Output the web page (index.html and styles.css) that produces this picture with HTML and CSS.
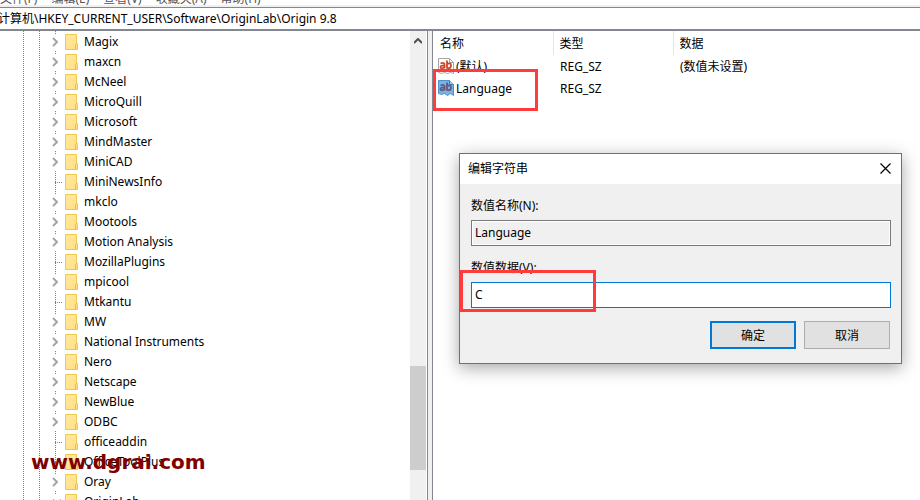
FILE: index.html
```
<!DOCTYPE html>
<html lang="zh-CN">
<head>
<meta charset="utf-8">
<title>注册表编辑器</title>
<link rel="stylesheet" href="styles.css">
</head>
<body>
<svg class="defs" aria-hidden="true">
  <linearGradient id="paper" x1="0" y1="0" x2="1" y2="1"><stop offset="0" stop-color="#ffe9a2"/><stop offset="1" stop-color="#ffdf80"/></linearGradient>
  <symbol id="folder" viewBox="0 0 13 16"><path d="M.5 .5h11v9h1v6H.5z" fill="url(#paper)" stroke="#efc94c"/><path d="M10.500 15.500v-5l1-1" fill="none" stroke="#e8bd38"/></symbol>
  <symbol id="right" viewBox="0 0 6 10"><path d="M1 1l4 4-4 4" fill="none" stroke="#a6a6a6" stroke-width="2"/></symbol>
  <symbol id="down" viewBox="0 0 10 6"><path d="M1 1l4 4 4-4" fill="none" stroke="#505050" stroke-width="2"/></symbol>
</svg>
<nav class="menu"><a href="#">文件(F)</a><a href="#">编辑(E)</a><a href="#">查看(V)</a><a href="#">收藏夹(A)</a><a href="#">帮助(H)</a></nav>
<input class="address" aria-label="地址" value="计算机\HKEY_CURRENT_USER\Software\OriginLab\Origin 9.8">
<main class="panes">
  <section class="tree-pane">
    <ul class="tree">
      <li><span class="twig"><svg class="chev"><use href="#right"/></svg></span><svg class="folder"><use href="#folder"/></svg>Magix</li>
      <li><span class="twig"><svg class="chev"><use href="#right"/></svg></span><svg class="folder"><use href="#folder"/></svg>maxcn</li>
      <li><span class="twig"><svg class="chev"><use href="#right"/></svg></span><svg class="folder"><use href="#folder"/></svg>McNeel</li>
      <li><span class="twig"><svg class="chev"><use href="#right"/></svg></span><svg class="folder"><use href="#folder"/></svg>MicroQuill</li>
      <li><span class="twig"><svg class="chev"><use href="#right"/></svg></span><svg class="folder"><use href="#folder"/></svg>Microsoft</li>
      <li><span class="twig"><svg class="chev"><use href="#right"/></svg></span><svg class="folder"><use href="#folder"/></svg>MindMaster</li>
      <li><span class="twig"><svg class="chev"><use href="#right"/></svg></span><svg class="folder"><use href="#folder"/></svg>MiniCAD</li>
      <li><span class="twig leaf"></span><svg class="folder"><use href="#folder"/></svg>MiniNewsInfo</li>
      <li><span class="twig"><svg class="chev"><use href="#right"/></svg></span><svg class="folder"><use href="#folder"/></svg>mkclo</li>
      <li><span class="twig"><svg class="chev"><use href="#right"/></svg></span><svg class="folder"><use href="#folder"/></svg>Mootools</li>
      <li><span class="twig"><svg class="chev"><use href="#right"/></svg></span><svg class="folder"><use href="#folder"/></svg>Motion Analysis</li>
      <li><span class="twig leaf"></span><svg class="folder"><use href="#folder"/></svg>MozillaPlugins</li>
      <li><span class="twig"><svg class="chev"><use href="#right"/></svg></span><svg class="folder"><use href="#folder"/></svg>mpicool</li>
      <li><span class="twig leaf"></span><svg class="folder"><use href="#folder"/></svg>Mtkantu</li>
      <li><span class="twig"><svg class="chev"><use href="#right"/></svg></span><svg class="folder"><use href="#folder"/></svg>MW</li>
      <li><span class="twig"><svg class="chev"><use href="#right"/></svg></span><svg class="folder"><use href="#folder"/></svg>National Instruments</li>
      <li><span class="twig"><svg class="chev"><use href="#right"/></svg></span><svg class="folder"><use href="#folder"/></svg>Nero</li>
      <li><span class="twig"><svg class="chev"><use href="#right"/></svg></span><svg class="folder"><use href="#folder"/></svg>Netscape</li>
      <li><span class="twig"><svg class="chev"><use href="#right"/></svg></span><svg class="folder"><use href="#folder"/></svg>NewBlue</li>
      <li><span class="twig"><svg class="chev"><use href="#right"/></svg></span><svg class="folder"><use href="#folder"/></svg>ODBC</li>
      <li><span class="twig leaf"></span><svg class="folder"><use href="#folder"/></svg>officeaddin</li>
      <li><span class="twig leaf"></span><svg class="folder"><use href="#folder"/></svg>OfficeToolPlus</li>
      <li><span class="twig"><svg class="chev"><use href="#right"/></svg></span><svg class="folder"><use href="#folder"/></svg>Oray</li>
      <li><span class="twig"><svg class="chev open"><use href="#down"/></svg></span><svg class="folder"><use href="#folder"/></svg>OriginLab</li>
    </ul>
    <div class="scroll"><svg class="up" viewBox="0 0 8 6"><path d="M0 5l4-4 4 4" fill="none" stroke="#505050" stroke-width="2"/></svg><div class="thumb"></div></div>
  </section>
  <div class="splitter"></div>
  <section class="values">
    <table>
      <thead><tr><th class="name">名称</th><th class="type">类型</th><th>数据</th></tr></thead>
      <tbody>
        <tr><td class="name"><span class="value"><svg class="ab" viewBox="0 0 16 16"><path d="M.5 .5h11l4 4v11l-3-1-3 1-3-1-3 1-3-1z" fill="#fff" stroke="#a5a5a5"/><path d="M11.500 .5v4h4" fill="none" stroke="#a5a5a5"/><g fill="none" stroke="#d04525" stroke-width="1.800"><path d="M2.500 5.500q4-1.500 4 1v4M6.500 7.500q-4-.2-4 1.500 0 2.500 4 .2M9 2.500v8M9 6q4-2 4 1.500t-4 2.500"/></g></svg>(默认)</span></td><td>REG_SZ</td><td>(数值未设置)</td></tr>
        <tr><td class="name"><span class="value"><svg class="ab" viewBox="0 0 16 16"><path d="M.5 .5h11l4 4v11l-3-2-3 2-3-2-3 1-3-1z" fill="#76b5e9" stroke="#4b91cd"/><path d="M11.500 .5v4h4" fill="#9dcdf3" stroke="#397fbc"/><g fill="none" stroke="#695776" stroke-width="1.800"><path d="M2.500 5.500q4-1.500 4 1v4M6.500 7.500q-4-.2-4 1.500 0 2.500 4 .2M9 2.500v8M9 6q4-2 4 1.500t-4 2.500"/></g></svg>Language</span></td><td>REG_SZ</td><td></td></tr>
      </tbody>
    </table>
  </section>
</main>
<form class="dialog" role="dialog" aria-labelledby="title">
  <header><h1 id="title">编辑字符串</h1><button type="button" class="close" aria-label="关闭"><svg viewBox="0 0 11 11"><path d="M.5 .5l10 10M10.500 .5l-10 10" stroke="#000" stroke-width="1.200"/></svg></button></header>
  <div class="fields">
    <label for="vname">数值名称(N):</label>
    <input id="vname" value="Language" readonly>
    <label for="vdata">数值数据(V):</label>
    <input id="vdata" class="active" value="C">
    <div class="actions"><button class="ok" type="button">确定</button><button type="button">取消</button></div>
  </div>
  <div class="mark mark-data"></div>
</form>
<div class="mark mark-value"></div>
<div class="watermark">www.dgrai.com</div>
</body>
</html>
```
FILE: styles.css
```
* { box-sizing: border-box; }
body, input, button {
  font-family: "Noto Sans", "Noto Sans CJK SC", sans-serif;
  font-size: 12px;
  color: #000;
}
body {
  margin: 0;
  height: 100vh;
  display: flex;
  flex-direction: column;
  position: relative;
  overflow: hidden;
  background: #fff;
}
svg { display: block; flex: none; }
.defs { position: absolute; width: 0; height: 0; }

.menu {
  flex: none;
  height: 7px;
  display: flex;
  align-items: flex-end;
  gap: 14px;
  overflow: hidden;
  line-height: 12px;
  border-bottom: 2px solid #f0f0f0;
}
.menu a { color: #555; text-decoration: none; }
.address {
  flex: none;
  width: 100%;
  height: 24px;
  margin: 0;
  padding: 0 0 2px;
  border: solid #828790;
  border-width: 1px 0 2px;
  outline: 0;
  text-indent: -2px;
}

.panes { flex: 1; min-height: 0; display: flex; }
.tree-pane { flex: 0 0 427px; display: flex; overflow: hidden; }
.tree {
  flex: 1;
  margin: 0;
  padding: 0 0 0 48px;
  list-style: none;
  background:
    repeating-linear-gradient(#808080 0 1px, transparent 1px 2px) 23px 0 / 1px 100% no-repeat,
    repeating-linear-gradient(#808080 0 1px, transparent 1px 2px) 39px 0 / 1px 100% no-repeat;
}
.tree li { display: flex; align-items: center; height: 20px; white-space: nowrap; }
.twig {
  width: 17px;
  height: 20px;
  display: flex;
  align-items: center;
  padding: 2px 0 0 4px;
  background: repeating-linear-gradient(#808080 0 1px, transparent 1px 2px) 7px 0 / 1px 100% no-repeat;
}
.leaf {
  background:
    repeating-linear-gradient(#808080 0 1px, transparent 1px 2px) 7px 0 / 1px 100% no-repeat,
    repeating-linear-gradient(90deg, #808080 0 1px, transparent 1px 2px) 7px 11px / 8px 1px no-repeat;
}
.chev { width: 6px; height: 16px; padding: 3px 0; background: #fff; }
.chev.open { width: 10px; padding: 5px 0; }
.folder { width: 13px; height: 16px; margin: 2px 6px 0 0; }
.scroll { width: 17px; background: #f0f0f0; border-right: 1px solid #fff; }
.up { width: 8px; height: 6px; margin: 7px 4px 0; }
.thumb { height: 104px; margin-top: 322px; background: #cdcdcd; }
.splitter { flex: 0 0 6px; border: solid #828790; border-width: 0 1px; background: #f0f0f0; }

.values { flex: 1; min-width: 0; }
table { width: 100%; border-collapse: collapse; table-layout: fixed; }
th { height: 24px; padding: 0 0 0 6px; font-weight: 400; text-align: left; }
th.name, th.type { width: 120px; border-right: 1px solid #e5e5e5; }
th.name { padding-left: 7px; }
td { height: 22px; padding: 0 0 0 7px; }
td.name { padding: 0 0 0 5px; }
.value { display: flex; align-items: center; gap: 2px; }
.ab { width: 16px; height: 16px; }

.dialog {
  position: absolute;
  top: 153px;
  right: 18px;
  width: 443px;
  border: 1px solid #707070;
  background: #f0f0f0;
  box-shadow: 0 4px 16px rgba(0, 0, 0, .35);
}
.dialog header {
  display: flex;
  align-items: center;
  justify-content: space-between;
  height: 30px;
  padding: 0 10px 2px 8px;
  background: #fff;
}
h1 { margin: 0; font-size: 12px; font-weight: 400; }
.close { padding: 0; border: 0; background: none; }
.close svg { width: 11px; height: 11px; }
.fields { display: flex; flex-direction: column; padding: 12px 10px 14px 11px; }
.fields label { line-height: 20px; margin-bottom: 4px; }
.fields input {
  height: 26px;
  padding: 0 3px 2px;
  border: 1px solid #7a7a7a;
  outline: 0;
  background: #f0f0f0;
  box-shadow: inset 0 0 0 1px #fff;
  margin-bottom: 12px;
}
.fields input.active { border-color: #0078d7; background: #fff; margin-bottom: 13px; }
.actions { display: flex; justify-content: flex-end; gap: 8px; padding-right: 1px; }
.actions button { width: 86px; height: 28px; padding: 0; border: 1px solid #adadad; background: #e1e1e1; }
.actions .ok { border: 2px solid #0078d7; }

.mark { position: absolute; border: 3px solid #ff3b3b; pointer-events: none; }
.mark-data { top: 116px; left: 0; width: 136px; height: 42px; }
.mark-value { top: 69px; left: 433px; width: 105px; height: 42px; }
.watermark {
  position: absolute;
  left: 31px;
  top: 450px;
  font: bold 20px/24px "DejaVu Sans", sans-serif;
  color: #800000;
}
```
